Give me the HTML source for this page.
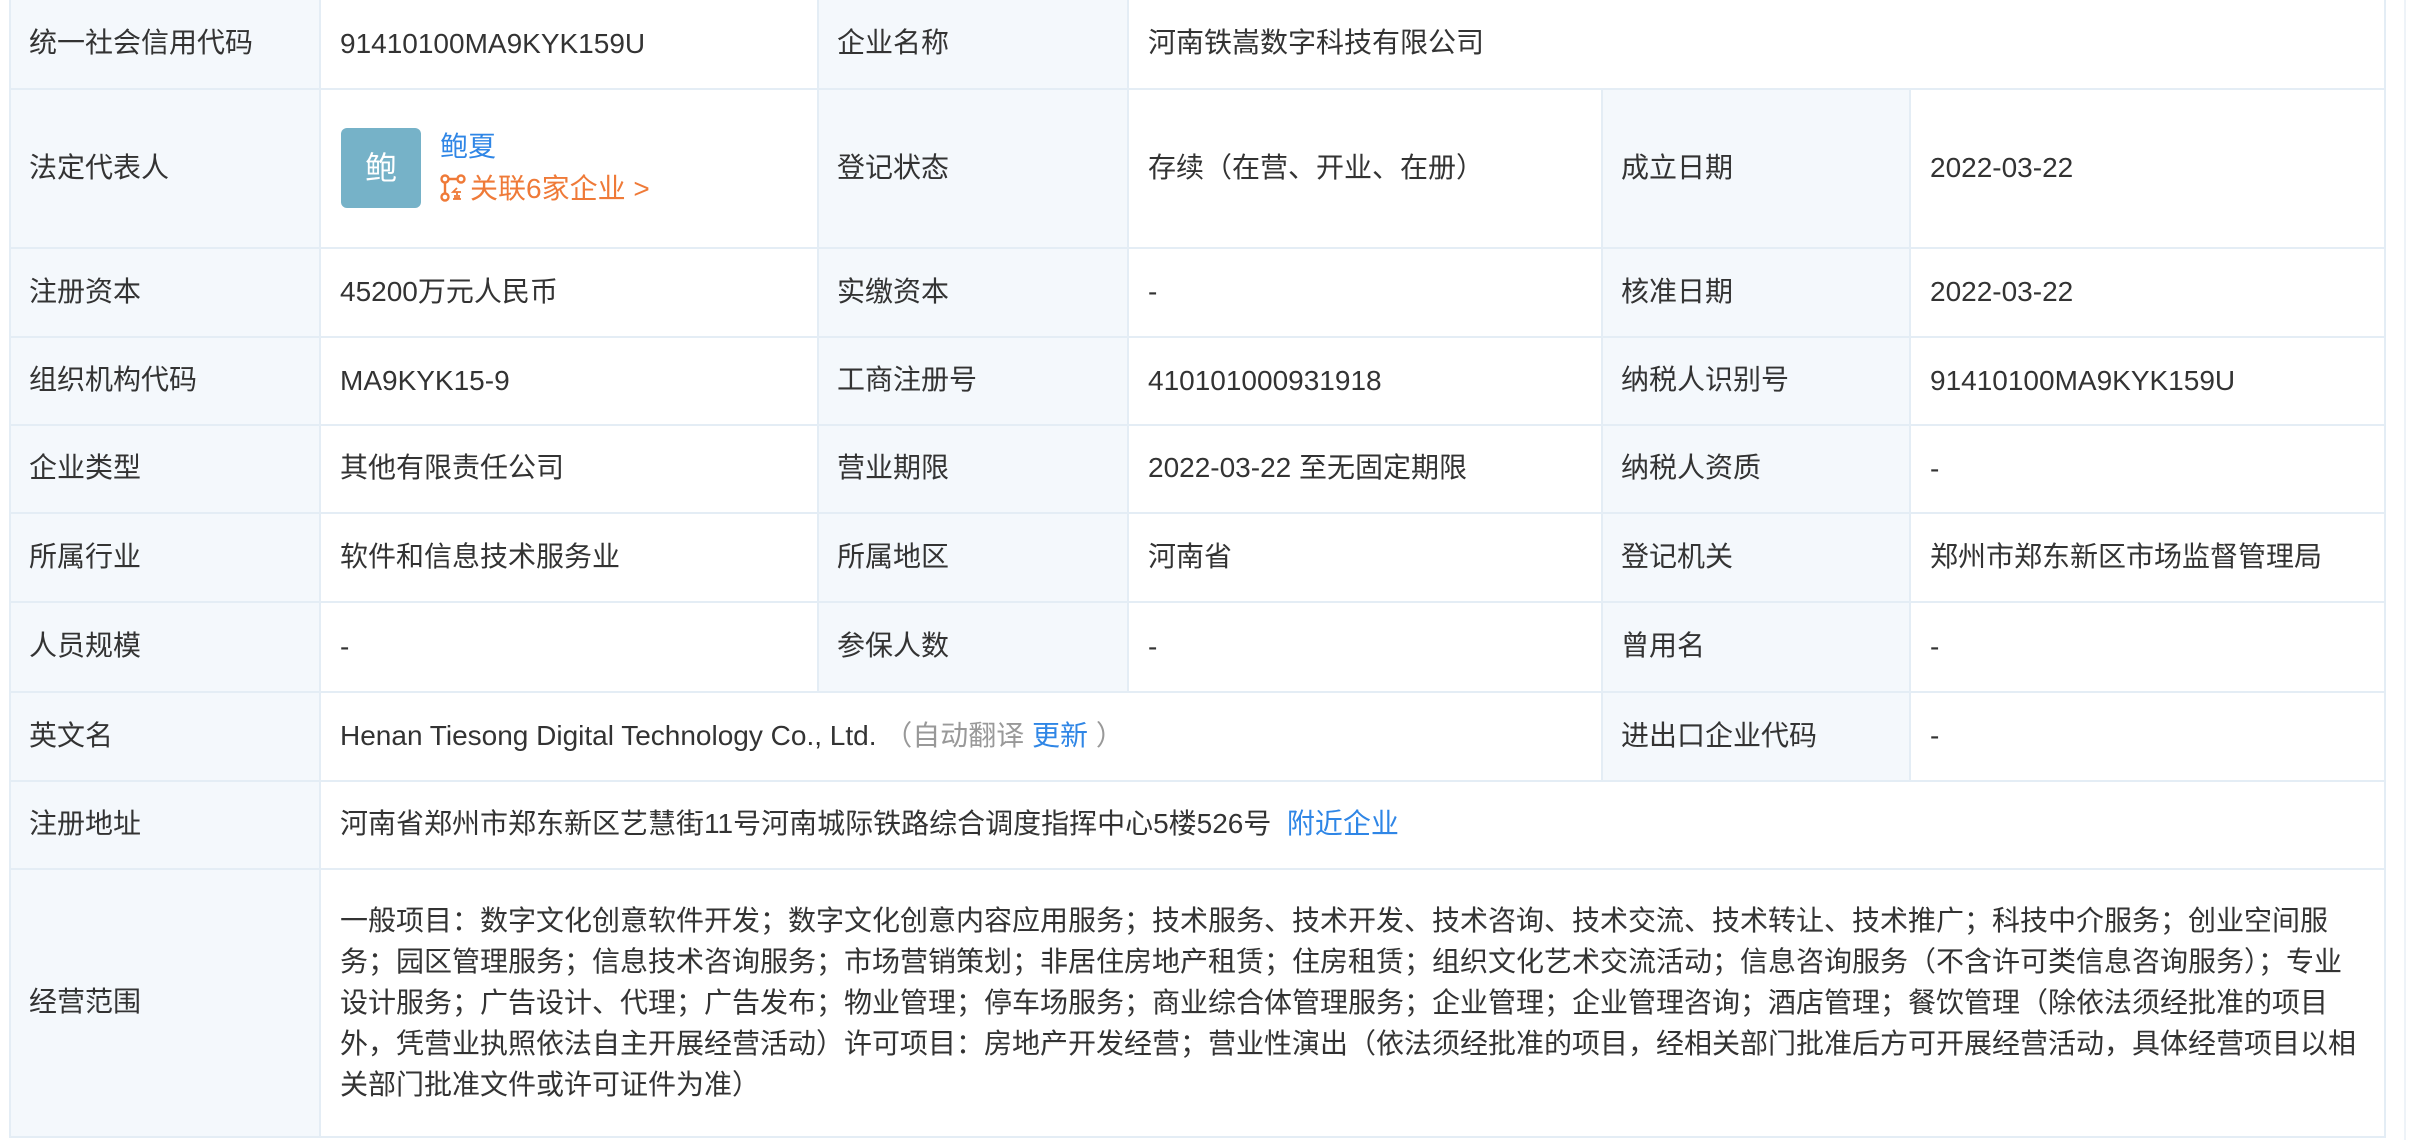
<!DOCTYPE html>
<html><head><meta charset="utf-8"><style>
body{margin:0;width:2418px;height:1140px;background:#fff;overflow:hidden;position:relative;font-family:"Liberation Sans","Noto Sans CJK SC",sans-serif;color:#333;font-size:28px}
table{position:absolute;left:9px;top:-2px;border-collapse:collapse;table-layout:fixed}
td{border:2px solid #e4edf5;padding:0 0 2px 19px;vertical-align:middle;white-space:nowrap;line-height:40px}
td.l{background:#f4f8fc;padding-left:18px}
.v{display:inline-block;height:40px;line-height:40px;vertical-align:middle;padding-top:0}
.b{color:#2f86e6}
.g{color:#999}
.o{color:#ef7a38}
.av{display:inline-block;width:80px;height:80px;background:#76b2c8;border-radius:6px;color:#fff;font-size:32px;line-height:80px;text-align:center;vertical-align:middle}
.scope div{height:41px;line-height:41px}
.strip{position:absolute;left:2404px;top:0;width:2px;height:1140px;background:#eef3f8}
</style></head><body>
<div class="strip"></div>
<table>
<colgroup><col style="width:310px"><col style="width:498px"><col style="width:310px"><col style="width:474px"><col style="width:308px"><col style="width:475px"></colgroup>
<tr style="height:90px"><td class="l">统一社会信用代码</td><td><span class="v">91410100MA9KYK159U</span></td><td class="l">企业名称</td><td colspan="3">河南铁嵩数字科技有限公司</td></tr>
<tr style="height:159px"><td class="l">法定代表人</td><td style="padding-left:20px"><span class="av">鲍</span><span style="display:inline-block;vertical-align:middle;margin-left:19px;line-height:42px"><span class="b">鲍夏</span><br><span class="o"><svg width="26" height="28" viewBox="0 0 26 28" style="vertical-align:-4px;margin-right:4px" fill="none" stroke="#ef7a38" stroke-width="2.4"><circle cx="5" cy="5" r="3.5"/><circle cx="21" cy="5" r="3.5"/><circle cx="5" cy="23" r="3.5"/><path d="M8.5 5H17.5M5 8.5V19.5"/><path d="M17 14l-4 4h8M17 18v7M13 25h8M15 21v4M19 21v4" stroke-width="1.8"/></svg>关联6家企业 &gt;</span></span></td><td class="l">登记状态</td><td>存续（在营、开业、在册）</td><td class="l">成立日期</td><td><span class="v">2022-03-22</span></td></tr>
<tr style="height:89px"><td class="l">注册资本</td><td>45200万元人民币</td><td class="l">实缴资本</td><td><span class="v">-</span></td><td class="l">核准日期</td><td><span class="v">2022-03-22</span></td></tr>
<tr style="height:88px"><td class="l">组织机构代码</td><td><span class="v">MA9KYK15-9</span></td><td class="l">工商注册号</td><td><span class="v">410101000931918</span></td><td class="l">纳税人识别号</td><td><span class="v">91410100MA9KYK159U</span></td></tr>
<tr style="height:88px"><td class="l">企业类型</td><td>其他有限责任公司</td><td class="l">营业期限</td><td>2022-03-22 至无固定期限</td><td class="l">纳税人资质</td><td><span class="v">-</span></td></tr>
<tr style="height:89px"><td class="l">所属行业</td><td>软件和信息技术服务业</td><td class="l">所属地区</td><td>河南省</td><td class="l">登记机关</td><td>郑州市郑东新区市场监督管理局</td></tr>
<tr style="height:90px"><td class="l">人员规模</td><td><span class="v">-</span></td><td class="l">参保人数</td><td><span class="v">-</span></td><td class="l">曾用名</td><td><span class="v">-</span></td></tr>
<tr style="height:89px"><td class="l">英文名</td><td colspan="3">Henan Tiesong Digital Technology Co., Ltd. <span class="g">（自动翻译 <span class="b">更新</span> ）</span></td><td class="l">进出口企业代码</td><td><span class="v">-</span></td></tr>
<tr style="height:88px"><td class="l">注册地址</td><td colspan="5">河南省郑州市郑东新区艺慧街11号河南城际铁路综合调度指挥中心5楼526号 &nbsp;<span class="b">附近企业</span></td></tr>
<tr style="height:268px"><td class="l">经营范围</td><td colspan="5" class="scope">
<div>一般项目：数字文化创意软件开发；数字文化创意内容应用服务；技术服务、技术开发、技术咨询、技术交流、技术转让、技术推广；科技中介服务；创业空间服</div>
<div>务；园区管理服务；信息技术咨询服务；市场营销策划；非居住房地产租赁；住房租赁；组织文化艺术交流活动；信息咨询服务（不含许可类信息咨询服务）；专业</div>
<div>设计服务；广告设计、代理；广告发布；物业管理；停车场服务；商业综合体管理服务；企业管理；企业管理咨询；酒店管理；餐饮管理（除依法须经批准的项目</div>
<div>外，凭营业执照依法自主开展经营活动）许可项目：房地产开发经营；营业性演出（依法须经批准的项目，经相关部门批准后方可开展经营活动，具体经营项目以相</div>
<div>关部门批准文件或许可证件为准）</div>
</td></tr>
</table>
</body></html>
